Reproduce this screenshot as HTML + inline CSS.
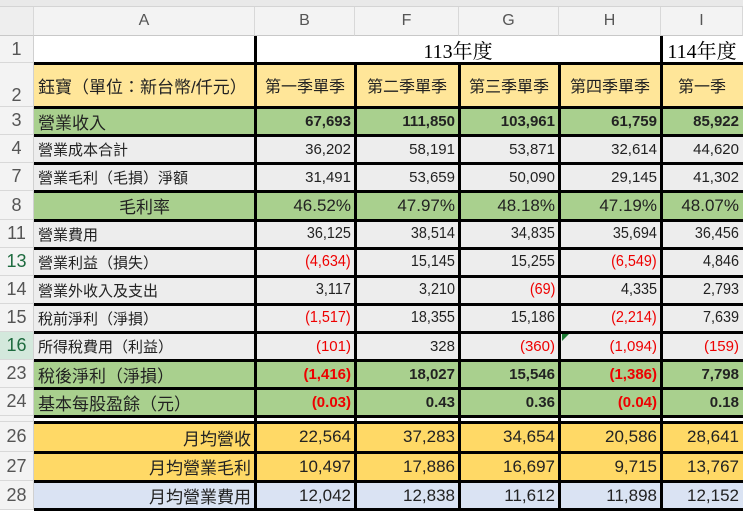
<!DOCTYPE html>
<html><head><meta charset="utf-8"><style>
body{margin:0;width:743px;height:510px;overflow:hidden;background:#fff;font-family:"Liberation Sans","Noto Sans CJK TC",sans-serif;position:relative}
.strip{position:absolute;left:0;top:0;width:743px;height:7px;background:#e9e9e9;border-bottom:1px solid #d4d4d4;box-sizing:border-box}
.row{position:absolute;left:0;width:743px}
.row>div{position:absolute;top:0;height:100%;display:flex;align-items:center;box-sizing:border-box;padding:0 4px;white-space:nowrap;font-size:15px;color:#222}
.rh{left:0;width:34px;background:#f3f3f3;border-right:1px solid #d0d0d0;border-bottom:1px solid #d8d8d8;justify-content:center;color:#555 !important;font-size:18px !important;padding:0 !important}
.a{left:34px;width:221px}.b{left:255px;width:100px}.f{left:355px;width:104px}.g{left:459px;width:100px}.h{left:559px;width:102px}.i{left:661px;width:82px}
.ch>div{background:#f3f3f3;color:#555;justify-content:center;font-size:16px;border-right:1px solid #d8d8d8;border-bottom:1px solid #c8c8c8}
.Y{background:#ffe699}.G{background:#a9d08e}.L{background:#ededed}.O{background:#ffd966}.B{background:#dae3f3}
.r{justify-content:flex-end}.c{justify-content:center}
.n span{display:inline-block;transform:scaleX(.9);transform-origin:right center;font-size:16px}
.bd{font-weight:bold}
.red{color:#e00 !important}
.big{font-size:17px !important}
.ser{font-family:"Liberation Serif","Noto Serif CJK SC",serif;font-size:20px !important;color:#000 !important}
.lab{font-size:16px !important}
.v{position:absolute;width:3px;background:#000}
.hl{position:absolute;height:3px;background:#000;left:34px;width:709px}
</style></head><body>
<div class="strip"></div>
<div class="row ch" style="top:7px;height:29px"><div class="rh" style="background:#eee"></div><div class="a">A</div><div class="b">B</div><div class="f">F</div><div class="g">G</div><div class="h">H</div><div class="i">I</div></div>

<div class="row" style="top:36px;height:27px"><div class="rh">1</div><div class="c ser" style="left:255px;width:406px">113年度</div><div class="i c ser">114年度</div></div>
<div class="row" style="top:63px;height:44px"><div class="rh" style="align-items:flex-end">2</div><div class="a Y" style="font-size:17px">鈺寶（單位：新台幣/仟元）</div><div class="b Y c lab">第一季單季</div><div class="f Y c lab">第二季單季</div><div class="g Y c lab">第三季單季</div><div class="h Y c lab">第四季單季</div><div class="i Y c lab">第一季</div></div>
<div class="row" style="top:107px;height:28px"><div class="rh">3</div><div class="a G" style="font-size:17px">營業收入</div><div class="b G r bd">67,693</div><div class="f G r bd">111,850</div><div class="g G r bd">103,961</div><div class="h G r bd">61,759</div><div class="i G r bd">85,922</div></div>
<div class="row" style="top:135px;height:28px"><div class="rh">4</div><div class="a L">營業成本合計</div><div class="b L r">36,202</div><div class="f L r">58,191</div><div class="g L r">53,871</div><div class="h L r">32,614</div><div class="i L r">44,620</div></div>
<div class="row" style="top:163px;height:28px"><div class="rh">7</div><div class="a L">營業毛利（毛損）淨額</div><div class="b L r">31,491</div><div class="f L r">53,659</div><div class="g L r">50,090</div><div class="h L r">29,145</div><div class="i L r">41,302</div></div>
<div class="row" style="top:191px;height:29px"><div class="rh">8</div><div class="a G c" style="font-size:17px">毛利率</div><div class="b G r big">46.52%</div><div class="f G r big">47.97%</div><div class="g G r big">48.18%</div><div class="h G r big">47.19%</div><div class="i G r big">48.07%</div></div>
<div class="row" style="top:220px;height:28px"><div class="rh">11</div><div class="a L">營業費用</div><div class="b L r n"><span>36,125</span></div><div class="f L r n"><span>38,514</span></div><div class="g L r n"><span>34,835</span></div><div class="h L r n"><span>35,694</span></div><div class="i L r n"><span>36,456</span></div></div>
<div class="row" style="top:248px;height:28px"><div class="rh" style="color:#1e6b3f !important">13</div><div class="a L">營業利益（損失）</div><div class="b L r n red"><span>(4,634)</span></div><div class="f L r n"><span>15,145</span></div><div class="g L r n"><span>15,255</span></div><div class="h L r n red"><span>(6,549)</span></div><div class="i L r n"><span>4,846</span></div></div>
<div class="row" style="top:276px;height:28px"><div class="rh">14</div><div class="a L">營業外收入及支出</div><div class="b L r n"><span>3,117</span></div><div class="f L r n"><span>3,210</span></div><div class="g L r n red"><span>(69)</span></div><div class="h L r n"><span>4,335</span></div><div class="i L r n"><span>2,793</span></div></div>
<div class="row" style="top:304px;height:28px"><div class="rh">15</div><div class="a L">稅前淨利（淨損）</div><div class="b L r n red"><span>(1,517)</span></div><div class="f L r n"><span>18,355</span></div><div class="g L r n"><span>15,186</span></div><div class="h L r n red"><span>(2,214)</span></div><div class="i L r n"><span>7,639</span></div></div>
<div class="row" style="top:332px;height:28px"><div class="rh" style="background:#d3e8dc;color:#1e6b3f !important">16</div><div class="a L">所得稅費用（利益）</div><div class="b L r red">(101)</div><div class="f L r">328</div><div class="g L r red">(360)</div><div class="h L r red">(1,094)</div><div class="i L r red">(159)</div></div>
<div class="row" style="top:360px;height:28px"><div class="rh">23</div><div class="a G" style="font-size:17px">稅後淨利（淨損）</div><div class="b G r bd red">(1,416)</div><div class="f G r bd">18,027</div><div class="g G r bd">15,546</div><div class="h G r bd red">(1,386)</div><div class="i G r bd">7,798</div></div>
<div class="row" style="top:388px;height:28px"><div class="rh">24</div><div class="a G" style="font-size:17px">基本每股盈餘（元）</div><div class="b G r bd red">(0.03)</div><div class="f G r bd">0.43</div><div class="g G r bd">0.36</div><div class="h G r bd red">(0.04)</div><div class="i G r bd">0.18</div></div>
<div class="row" style="top:416px;height:6px"><div class="rh"></div></div>
<div class="row" style="top:422px;height:30px"><div class="rh">26</div><div class="a O r big">月均營收</div><div class="b O r big">22,564</div><div class="f O r big">37,283</div><div class="g O r big">34,654</div><div class="h O r big">20,586</div><div class="i O r big">28,641</div></div>
<div class="row" style="top:452px;height:29px"><div class="rh">27</div><div class="a O r big">月均營業毛利</div><div class="b O r big">10,497</div><div class="f O r big">17,886</div><div class="g O r big">16,697</div><div class="h O r big">9,715</div><div class="i O r big">13,767</div></div>
<div class="row" style="top:481px;height:29px"><div class="rh">28</div><div class="a B r big">月均營業費用</div><div class="b B r big">12,042</div><div class="f B r big">12,838</div><div class="g B r big">11,612</div><div class="h B r big">11,898</div><div class="i B r big">12,152</div></div>

<div class="hl" style="top:62px"></div><div class="hl" style="top:106px"></div><div class="hl" style="top:134px"></div><div class="hl" style="top:162px"></div><div class="hl" style="top:190px"></div><div class="hl" style="top:219px"></div><div class="hl" style="top:247px"></div><div class="hl" style="top:275px"></div><div class="hl" style="top:303px"></div><div class="hl" style="top:331px"></div><div class="hl" style="top:359px"></div><div class="hl" style="top:387px"></div><div class="hl" style="top:415px"></div><div class="hl" style="top:421px"></div><div class="hl" style="top:451px"></div><div class="hl" style="top:480px"></div><div class="hl" style="top:508px"></div>
<div class="v" style="left:254px;top:36px;height:474px"></div><div class="v" style="left:354px;top:62px;height:448px"></div><div class="v" style="left:458px;top:62px;height:448px"></div><div class="v" style="left:558px;top:62px;height:448px"></div><div class="v" style="left:660px;top:36px;height:474px"></div>
<div style="position:absolute;left:562px;top:334px;width:0;height:0;border-top:7px solid #1e7b34;border-right:7px solid transparent"></div>
</body></html>
